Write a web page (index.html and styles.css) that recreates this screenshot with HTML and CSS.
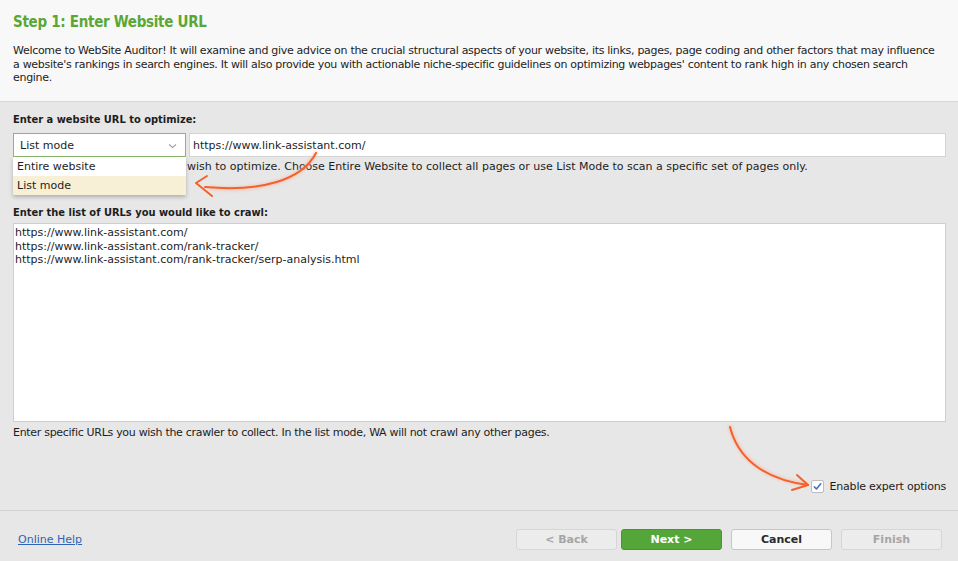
FILE: index.html
```html
<!DOCTYPE html>
<html lang="en">
<head>
<meta charset="utf-8">
<title>Step 1: Enter Website URL</title>
<link rel="stylesheet" href="styles.css">
</head>
<body>
<div class="wizard">
  <header class="intro">
    <h1 class="title">Step 1: Enter Website URL</h1>
    <p class="desc">Welcome to WebSite Auditor! It will examine and give advice on the crucial structural aspects of your website, its links, pages, page coding and other factors that may influence a website's rankings in search engines. It will also provide you with actionable niche-specific guidelines on optimizing webpages' content to rank high in any chosen search engine.</p>
  </header>

  <main class="content">
    <div class="field-title">Enter a website URL to optimize:</div>
    <div class="url-row">
      <div class="select-wrap">
        <div class="select">
          <span>List mode</span>
          <svg class="chev" width="9" height="6" viewBox="0 0 9 6"><path d="M1 1.5 L4.5 4.5 L8 1.5" fill="none" stroke="#a0a0a0" stroke-width="1.1"/></svg>
        </div>
        <ul class="dropdown">
          <li class="opt">Entire website</li>
          <li class="opt opt-sel">List mode</li>
        </ul>
      </div>
      <div class="url-input">https://www.link-assistant.com/</div>
    </div>
    <p class="hint hint-url">Enter the URL of a website you wish to optimize. Choose Entire Website to collect all pages or use List Mode to scan a specific set of pages only.</p>

    <div class="field-title second">Enter the list of URLs you would like to crawl:</div>
    <div class="textarea">https://www.link-assistant.com/<br>https://www.link-assistant.com/rank-tracker/<br>https://www.link-assistant.com/rank-tracker/serp-analysis.html</div>
    <p class="hint hint-list">Enter specific URLs you wish the crawler to collect. In the list mode, WA will not crawl any other pages.</p>

    <div class="expert-row">
      <span class="checkbox">
        <svg width="11" height="11" viewBox="0 0 11 11"><path d="M2.3 5.8 L4.4 8 L8.8 2.8" fill="none" stroke="#3f72c4" stroke-width="1.6" stroke-linecap="round" stroke-linejoin="round"/></svg>
      </span>
      <span class="expert-label">Enable expert options</span>
    </div>
  </main>

  <footer class="footer">
    <a class="help" href="#">Online Help</a>
    <div class="buttons">
      <button class="btn btn-disabled">&lt; Back</button>
      <button class="btn btn-primary">Next &gt;</button>
      <button class="btn btn-default gap">Cancel</button>
      <button class="btn btn-disabled gap">Finish</button>
    </div>
  </footer>

  <svg class="annotations" width="958" height="561" viewBox="0 0 958 561">
    <defs>
      <filter id="glow" x="-20%" y="-20%" width="140%" height="140%">
        <feGaussianBlur stdDeviation="1.6"/>
      </filter>
    </defs>
    <g fill="none" stroke="#f5b7a0" stroke-width="4" stroke-linecap="round" filter="url(#glow)" opacity="0.6">
      <path d="M316 153 C302 180 262 192 210 188"/>
      <path d="M730 427 C738 455 760 478 806 484"/>
    </g>
    <g fill="none" stroke="#f4612c" stroke-width="2" stroke-linecap="round" stroke-linejoin="round">
      <path d="M316 153 C302 180 262 192 205 187"/>
      <path d="M207 176 L196 183 L212 196"/>
      <path d="M730 427 C737 455 760 479 808 485"/>
      <path d="M797 475 L808 485 L792 490"/>
    </g>
  </svg>
</div>
</body>
</html>
```

FILE: styles.css
```css
* { box-sizing: border-box; }
html, body { margin: 0; padding: 0; }
body {
  font-family: "DejaVu Sans", "Liberation Sans", sans-serif;
  font-size: 11px;
  color: #1d1d1d;
  background: #e7e7e7;
}
.wizard {
  position: relative;
  width: 958px;
  height: 561px;
  display: flex;
  flex-direction: column;
  overflow: hidden;
}
.intro {
  background: #f8f8f8;
  height: 102px;
  padding: 11px 13px 0 13px;
  border-bottom: 1px solid #d8d8d8;
}
.title {
  margin: 0;
  font-family: "DejaVu Sans Condensed", "DejaVu Sans", sans-serif;
  font-stretch: condensed;
  font-size: 15px;
  font-weight: bold;
  letter-spacing: -0.3px;
  color: #5ba735;
  line-height: 22px;
}
.desc {
  margin: 11px 0 0 0;
  line-height: 13.5px;
  width: 925px;
  letter-spacing: -0.3px;
}
.content {
  flex: 1;
  padding: 11px 12px 0 13px;
  display: flex;
  flex-direction: column;
  border-bottom: 1px solid #d2d2d2;
}
.field-title {
  font-family: "DejaVu Sans Condensed", "DejaVu Sans", sans-serif;
  font-stretch: condensed;
  font-weight: bold;
  line-height: 14px;
}
.field-title.second { margin-top: 32px; }
.url-row {
  display: flex;
  margin-top: 6px;
  gap: 3px;
  height: 24px;
}
.select-wrap {
  position: relative;
  width: 173px;
  flex: none;
}
.select {
  height: 24px;
  border: 1px solid #8ab870;
  background: #fff;
  display: flex;
  align-items: center;
  justify-content: space-between;
  padding: 0 8px 0 6px;
}
.chev { margin-top: 1px; }
.dropdown {
  position: absolute;
  left: 0;
  top: 24px;
  width: 173px;
  margin: 0;
  padding: 0;
  list-style: none;
  background: #fff;
  box-shadow: 0 2px 4px rgba(0,0,0,0.25);
  z-index: 2;
}
.opt {
  height: 19px;
  line-height: 19px;
  padding-left: 4px;
}
.opt-sel { background: #f7efd6; }
.url-input {
  flex: 1;
  height: 24px;
  background: #fff;
  border: 1px solid #d4d4d4;
  display: flex;
  align-items: center;
  padding-left: 3px;
}
.hint {
  margin: 3px 0 0 0;
  line-height: 14px;
}
.hint-list { letter-spacing: -0.3px; margin-top: 4px; }
.textarea {
  margin-top: 3px;
  height: 199px;
  background: #fff;
  border: 1px solid #cfcfcf;
  padding: 2px 1px;
  line-height: 13.5px;
}
.expert-row {
  margin-top: 40px;
  display: flex;
  align-items: center;
  justify-content: flex-end;
  gap: 6px;
}
.expert-label { letter-spacing: -0.2px; }
.checkbox {
  width: 13px;
  height: 13px;
  background: #fff;
  border: 1px solid #bdbdbd;
  border-radius: 2px;
  display: flex;
  align-items: center;
  justify-content: center;
}
.checkbox svg { display: block; }
.footer {
  height: 50px;
  flex: none;
  display: flex;
  align-items: center;
  justify-content: space-between;
  padding: 6px 16px 0 18px;
}
.help {
  color: #2f64b4;
  text-decoration: underline;
  font-size: 11px;
}
.buttons {
  display: flex;
  gap: 4px;
}
.btn {
  width: 101px;
  height: 21px;
  font-family: inherit;
  font-size: 11px;
  font-weight: bold;
  border-radius: 3px;
  border: 1px solid #d0d0d0;
  padding: 0;
  line-height: 19px;
}
.btn.gap { margin-left: 5px; }
.btn-disabled {
  background: #ececec;
  color: #a5a5a5;
  border-color: #d6d6d6;
}
.btn-primary {
  background: #55a638;
  color: #fff;
  border-color: #4a9530;
}
.btn-default {
  background: #f8f8f8;
  color: #2a2a2a;
  border-color: #c6c6c6;
}
.annotations {
  position: absolute;
  left: 0;
  top: 0;
  pointer-events: none;
  z-index: 5;
}
```
